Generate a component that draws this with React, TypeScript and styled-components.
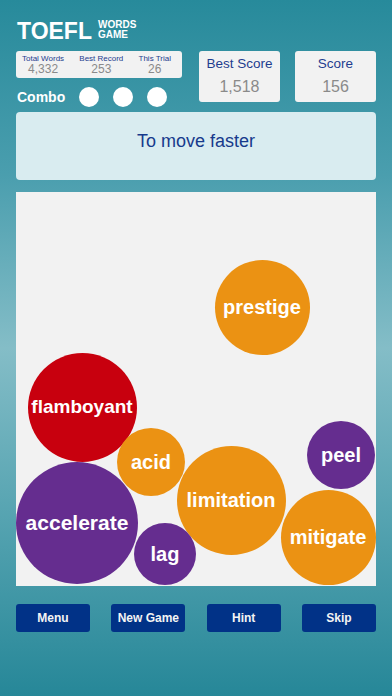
import React from 'react';
import styled, { createGlobalStyle } from 'styled-components';

const GlobalStyle = createGlobalStyle`
  html, body {
    margin: 0;
    padding: 0;
  }
  body {
    font-family: 'Liberation Sans', Arial, sans-serif;
  }
`;

const Screen = styled.div`
  width: 392px;
  height: 696px;
  box-sizing: border-box;
  padding: 16px 16px 0;
  display: flex;
  flex-direction: column;
  background: linear-gradient(
    #278a9b 0%,
    #4a9eae 25%,
    #84bdc7 50%,
    #5aa6b3 72%,
    #268798 100%
  );
  overflow: hidden;
`;

const Header = styled.div`
  display: flex;
  justify-content: space-between;
  align-items: flex-start;
`;

const LeftCol = styled.div`
  display: flex;
  flex-direction: column;
  width: 166px;
`;

const Logo = styled.div`
  display: flex;
  align-items: center;
  height: 30px;
  margin-left: 1px;
  color: #fff;
`;

const LogoBig = styled.span`
  font-size: 23px;
  font-weight: bold;
`;

const LogoSmall = styled.span`
  display: flex;
  flex-direction: column;
  margin-left: 6px;
  font-size: 10px;
  font-weight: bold;
  line-height: 10px;
  margin-top: -2px;
`;

const StatsBox = styled.div`
  margin-top: 5px;
  height: 27px;
  border-radius: 3px;
  background: #f2f2f2;
  display: flex;
  justify-content: space-between;
  padding: 0 11px 0 6px;
`;

const Stat = styled.div`
  display: flex;
  flex-direction: column;
  align-items: center;
  padding-top: 3px;
`;

const StatLabel = styled.span`
  font-size: 8px;
  color: #1f3d8f;
  line-height: 9px;
`;

const StatValue = styled.span`
  font-size: 12px;
  color: #8a8a8a;
  line-height: 13px;
`;

const ComboRow = styled.div`
  display: flex;
  align-items: center;
  margin-top: 8px;
  height: 22px;
`;

const ComboLabel = styled.span`
  color: #fff;
  font-size: 14px;
  font-weight: bold;
  margin-left: 1px;
  width: 62px;
`;

const Dot = styled.span`
  width: 20px;
  height: 20px;
  border-radius: 50%;
  background: #fff;
  margin-right: 14px;
`;

const ScoreBoxes = styled.div`
  display: flex;
  gap: 15px;
  margin-top: 35px;
`;

const ScoreBox = styled.div`
  width: 81px;
  height: 51px;
  border-radius: 3px;
  background: #f2f2f2;
  display: flex;
  flex-direction: column;
  align-items: center;
  padding-top: 5px;
  box-sizing: border-box;
`;

const ScoreLabel = styled.span`
  font-size: 13.5px;
  color: #1f3d8f;
  line-height: 16px;
`;

const ScoreValue = styled.span`
  font-size: 16px;
  color: #8a8a8a;
  margin-top: 6px;
  line-height: 18px;
`;

const Message = styled.div`
  margin-top: 4px;
  height: 68px;
  border-radius: 4px;
  background: #d9ecf0;
  display: flex;
  align-items: center;
  justify-content: center;
  color: #173a8c;
  font-size: 18px;
  padding-bottom: 10px;
  box-sizing: border-box;
`;

const Field = styled.div`
  position: relative;
  margin-top: 12px;
  height: 394px;
  background: #f2f2f2;
  overflow: hidden;
`;

const Bubble = styled.div<{ $color: string; $size: number; $font: number }>`
  position: absolute;
  width: ${p => p.$size}px;
  height: ${p => p.$size}px;
  border-radius: 50%;
  background: ${p => p.$color};
  color: #fff;
  font-weight: bold;
  font-size: ${p => p.$font}px;
  display: flex;
  align-items: center;
  justify-content: center;
`;

const ButtonRow = styled.div`
  display: flex;
  justify-content: space-between;
  margin-top: 18px;
`;

const Button = styled.button`
  width: 74px;
  height: 28px;
  border: none;
  border-radius: 3px;
  background: #013287;
  color: #f4f4f4;
  font-family: 'Liberation Sans', Arial, sans-serif;
  font-weight: bold;
  font-size: 12px;
  padding: 0;
`;

const ORANGE = '#eb9213';
const PURPLE = '#652d8f';
const RED = '#c8000e';

const FIELD_X = 16;
const FIELD_Y = 192;

const bubbles = [
  { word: 'prestige', color: ORANGE, cx: 262, cy: 307, d: 95, font: 20 },
  { word: 'flamboyant', color: RED, cx: 82, cy: 407, d: 109, font: 19 },
  { word: 'peel', color: PURPLE, cx: 341, cy: 455, d: 68, font: 20 },
  { word: 'acid', color: ORANGE, cx: 151, cy: 462, d: 68, font: 20 },
  { word: 'limitation', color: ORANGE, cx: 231, cy: 500, d: 109, font: 20 },
  { word: 'accelerate', color: PURPLE, cx: 77, cy: 523, d: 122, font: 21 },
  { word: 'mitigate', color: ORANGE, cx: 328, cy: 537, d: 95, font: 20 },
  { word: 'lag', color: PURPLE, cx: 165, cy: 554, d: 62, font: 20 },
];

const App: React.FC = () => {
  return (
    <Screen>
      <GlobalStyle />
      <Header>
        <LeftCol>
          <Logo>
            <LogoBig>TOEFL</LogoBig>
            <LogoSmall>
              <span>WORDS</span>
              <span>GAME</span>
            </LogoSmall>
          </Logo>
          <StatsBox>
            <Stat>
              <StatLabel>Total Words</StatLabel>
              <StatValue>4,332</StatValue>
            </Stat>
            <Stat>
              <StatLabel>Best Record</StatLabel>
              <StatValue>253</StatValue>
            </Stat>
            <Stat>
              <StatLabel>This Trial</StatLabel>
              <StatValue>26</StatValue>
            </Stat>
          </StatsBox>
          <ComboRow>
            <ComboLabel>Combo</ComboLabel>
            <Dot />
            <Dot />
            <Dot />
          </ComboRow>
        </LeftCol>
        <ScoreBoxes>
          <ScoreBox>
            <ScoreLabel>Best Score</ScoreLabel>
            <ScoreValue>1,518</ScoreValue>
          </ScoreBox>
          <ScoreBox>
            <ScoreLabel>Score</ScoreLabel>
            <ScoreValue>156</ScoreValue>
          </ScoreBox>
        </ScoreBoxes>
      </Header>
      <Message>To move faster</Message>
      <Field>
        {bubbles.map(b => (
          <Bubble
            key={b.word}
            $color={b.color}
            $size={b.d}
            $font={b.font}
            style={{ left: b.cx - b.d / 2 - FIELD_X, top: b.cy - b.d / 2 - FIELD_Y }}
          >
            {b.word}
          </Bubble>
        ))}
      </Field>
      <ButtonRow>
        <Button>Menu</Button>
        <Button>New Game</Button>
        <Button>Hint</Button>
        <Button>Skip</Button>
      </ButtonRow>
    </Screen>
  );
};

export default App;
